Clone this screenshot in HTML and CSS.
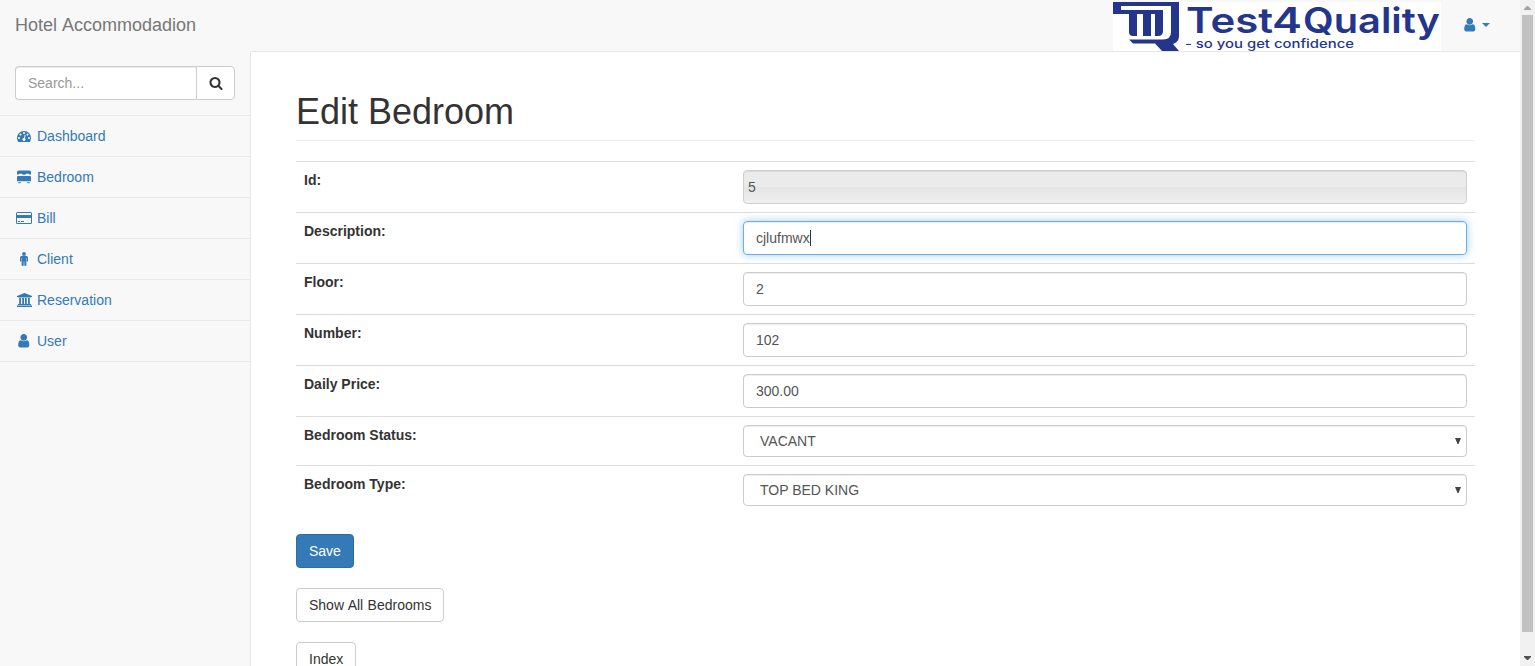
FILE: index.html
```html
<!DOCTYPE html>
<html lang="en">
<head>
<meta charset="utf-8">
<title>Edit Bedroom</title>
<link rel="stylesheet" href="styles.css">
</head>
<body>
<div class="window">
  <div class="app">
    <header class="navbar">
      <a class="brand">Hotel Accommodadion</a>
      <svg class="logo" width="328" height="49" viewBox="0 0 328 49">
        <rect width="328" height="49" fill="#fff"/>
        <g fill="#24358c">
          <path d="M0 0H66V34Q66 40 60 42L66 49H49L42 41.500H20L16 37.500H50Q58 37.500 58 30V4H8V8H50V29Q50 34 45 34H42V12H38V34H30V12H24V34H20Q16 34 16 30V12H0Z"/>
          <text class="wordmark" y="31"><tspan x="73" textLength="87" lengthAdjust="spacingAndGlyphs">Test</tspan><tspan x="159" textLength="30" lengthAdjust="spacingAndGlyphs">4</tspan><tspan x="190" textLength="137" lengthAdjust="spacingAndGlyphs">Quality</tspan></text>
          <text class="tagline" x="72" y="46" textLength="169" lengthAdjust="spacingAndGlyphs">- so you get confidence</text>
        </g>
      </svg>
      <a class="account">
        <svg class="icon user" viewBox="0 0 1792 1792"><path d="M1536 1399q0 109-62.5 187t-150.5 78h-854q-88 0-150.5-78t-62.5-187q0-85 8.5-160.5t31.5-152 58.5-131 94-89 134.5-34.5q131 128 313 128t313-128q76 0 134.5 34.5t94 89 58.5 131 31.5 152 8.5 160.5zm-256-887q0 159-112.5 271.5t-271.5 112.5-271.5-112.5-112.5-271.5 112.5-271.5 271.5-112.5 271.5 112.5 112.5 271.5z"/></svg>
        <svg class="caret" viewBox="0 0 8 4"><path d="M0 0H8L4 4Z"/></svg>
      </a>
    </header>
    <div class="body">
      <nav class="sidebar">
        <div class="search">
          <input class="search-input" type="text" placeholder="Search...">
          <button class="search-button"><svg class="icon" viewBox="0 0 1792 1792"><path d="M1216 832q0-185-131.5-316.5t-316.5-131.5-316.5 131.5-131.5 316.5 131.5 316.5 316.5 131.5 316.5-131.5 131.5-316.5zm512 832q0 52-38 90t-90 38q-54 0-90-38l-343-342q-179 124-399 124-143 0-273.5-55.5t-225-150-150-225-55.5-273.5 55.5-273.5 150-225 225-150 273.5-55.5 273.500 55.500 225 150 150 225 55.500 273.500q0 220-124 399l343 343q37 37 37 90z"/></svg></button>
        </div>
        <a class="item"><svg class="icon" viewBox="0 0 1792 1792"><path d="M384 1152q0-53-37.5-90.5t-90.5-37.5-90.5 37.5-37.5 90.5 37.5 90.5 90.5 37.5 90.5-37.5 37.5-90.5zm192-448q0-53-37.5-90.5t-90.5-37.5-90.5 37.5-37.5 90.5 37.5 90.5 90.5 37.5 90.5-37.5 37.5-90.5zm428 481l101-382q6-26-7.5-48.5t-38.5-29.5-48 6.5-30 39.5l-101 382q-60 5-107 43.5t-63 98.5q-20 77 20 146t117 89 146-20 89-117q16-60-6-117t-72-91zm660-33q0-53-37.5-90.5t-90.5-37.5-90.5 37.5-37.5 90.5 37.5 90.5 90.5 37.5 90.5-37.5 37.5-90.5zm-640-640q0-53-37.5-90.5t-90.5-37.5-90.5 37.5-37.5 90.5 37.5 90.5 90.5 37.5 90.5-37.5 37.5-90.5zm448 192q0-53-37.5-90.5t-90.5-37.5-90.5 37.5-37.5 90.5 37.5 90.5 90.5 37.5 90.5-37.5 37.5-90.5zm320 448q0 261-141 483-19 29-54 29h-1402q-35 0-54-29-141-221-141-483 0-182 71-348t191-286 286-191 348-71 348 71 286 191 191 286 71 348z"/></svg>Dashboard</a>
        <a class="item"><svg class="icon" viewBox="0 0 14 14"><path d="M0 2Q0 .5 1.500 .5H12.500Q14 .5 14 2V4.500H12.500L11.500 3.700H9L8 4.800H6L5 3.700H2.500L1.500 4.500H0ZM1 6H13Q14 6 14 7V11.300H0V7Q0 6 1 6ZM1 12.200H4L3.500 13.200H1.500ZM10 12.200H13L12.500 13.200H10.500Z"/></svg>Bedroom</a>
        <a class="item"><svg class="icon wide" viewBox="0 0 16 14"><path fill-rule="evenodd" d="M1.5 1H14.5Q16 1 16 2.5V11.5Q16 13 14.5 13H1.5Q0 13 0 11.5V2.5Q0 1 1.5 1ZM1 2V4H15V2ZM1 7V12H15V7ZM2 10H4V11H2ZM5 10H8V11H5Z"/></svg>Bill</a>
        <a class="item"><svg class="icon" viewBox="0 0 14 14"><circle cx="7" cy="2" r="1.9"/><path d="M4.500 4H9.500Q11 4 11 5.500V9Q11 9.600 10.400 9.600T9.800 9V6H9.400V13Q9.400 14 8.300 14T7.300 13V9.500H6.700V13Q6.700 14 5.700 14T4.600 13V6H4.200V9Q4.200 9.600 3.600 9.600T3 9V5.500Q3 4 4.500 4Z"/></svg>Client</a>
        <a class="item"><svg class="icon bank" viewBox="0 0 15 14"><path d="M7.500 0L15 3V4H14V4.600H1V4H0V3ZM2.200 5H4V11H5.200V5H7V11H8V5H9.800V11H11V5H12.800V11H14V12H1V11H2.200ZM0 12.600H15V14H0Z"/></svg>Reservation</a>
        <a class="item"><svg class="icon user" viewBox="0 0 1792 1792"><path d="M1536 1399q0 109-62.5 187t-150.5 78h-854q-88 0-150.5-78t-62.5-187q0-85 8.5-160.5t31.5-152 58.5-131 94-89 134.5-34.5q131 128 313 128t313-128q76 0 134.5 34.5t94 89 58.5 131 31.5 152 8.5 160.5zm-256-887q0 159-112.5 271.5t-271.5 112.5-271.5-112.5-112.5-271.5 112.5-271.5 271.5-112.5 271.5 112.5 112.5 271.5z"/></svg>User</a>
      </nav>
      <main class="page">
        <h1 class="title">Edit Bedroom</h1>
        <div class="form">
          <div class="row"><label>Id:</label><div class="field disabled">5</div></div>
          <div class="row"><label>Description:</label><div class="field focused">cjlufmwx<span class="cursor"></span></div></div>
          <div class="row"><label>Floor:</label><div class="field">2</div></div>
          <div class="row"><label>Number:</label><div class="field">102</div></div>
          <div class="row"><label>Daily Price:</label><div class="field">300.00</div></div>
          <div class="row"><label>Bedroom Status:</label><div class="field select">VACANT<svg class="arrow" viewBox="0 0 6 6"><path d="M0 0H6L3.5 6H2.5Z"/></svg></div></div>
          <div class="row"><label>Bedroom Type:</label><div class="field select">TOP BED KING<svg class="arrow" viewBox="0 0 6 6"><path d="M0 0H6L3.5 6H2.5Z"/></svg></div></div>
        </div>
        <div class="actions">
          <button class="button primary">Save</button>
          <button class="button show-all">Show All Bedrooms</button>
          <button class="button">Index</button>
        </div>
      </main>
    </div>
  </div>
  <div class="scrollbar">
    <svg class="scroll-arrow" viewBox="0 0 7 4"><path fill="#a3a3a3" d="M3 0H4L7 3V4H0V3Z"/></svg>
    <div class="thumb"></div>
    <svg class="scroll-arrow" viewBox="0 0 7 4"><path fill="#505050" d="M0 0H7V1L4 4H3L0 1Z"/></svg>
  </div>
</div>
</body>
</html>
```

FILE: styles.css
```css
* { box-sizing: border-box; }
body {
  margin: 0;
  overflow: hidden;
  font: 14px/20px "Liberation Sans", Arial, sans-serif;
  color: #333;
  background: #fff;
}
.window { display: flex; height: 666px; overflow: hidden; }
.app { flex: 1; display: flex; flex-direction: column; background: #f8f8f8; }
.navbar { display: flex; height: 51px; flex: none; }
.brand { padding: 15px; flex: 1; font-size: 18px; word-spacing: 1px; color: #777; }
.logo { margin-top: 2px; display: block; overflow: visible; }
.wordmark { font: 600 35px Inter, sans-serif; }
.tagline { font: 500 12px Inter, sans-serif; }
.account { display: flex; align-items: center; gap: 5px; width: 79px; height: 50px; padding-left: 20.5px; color: #337ab7; }
.icon { width: 14px; height: 14px; fill: currentColor; flex: none; }
.icon.wide { width: 16px; }
.icon.bank { width: 15px; }
.icon.user { width: 15.5px; height: 15.5px; }
.caret { width: 8px; height: 4px; fill: currentColor; }
.body { display: flex; flex: 1; min-height: 0; }
.sidebar { width: 250px; flex: none; }
.search { display: flex; padding: 15px; border-bottom: 1px solid #e7e7e7; }
.search-input {
  width: 182px;
  height: 34px;
  padding: 6px 12px;
  font: inherit;
  border: 1px solid #ccc;
  border-right: 0;
  border-radius: 4px 0 0 4px;
  box-shadow: inset 0 1px 1px rgba(0, 0, 0, .075);
}
.search-input::placeholder { color: #999; }
.search-button {
  display: flex;
  align-items: center;
  width: 39px;
  margin-left: -1px;
  padding: 0 12px;
  color: #333;
  background: #fff;
  border: 1px solid #ccc;
  border-radius: 0 4px 4px 0;
}
.item {
  display: grid;
  grid-template-columns: 18px 1fr;
  column-gap: 4px;
  align-items: center;
  height: 41px;
  padding: 0 15px;
  color: #337ab7;
  border-bottom: 1px solid #e7e7e7;
}
.item .icon { justify-self: center; }
.page {
  flex: 1;
  padding: 0 45px;
  background: #fff;
  border-left: 1px solid #e7e7e7;
  border-top: 1px solid #e7e7e7;
}
.title {
  margin: 40px 0 20px;
  padding-bottom: 9px;
  font-size: 36px;
  font-weight: 500;
  line-height: 39px;
  border-bottom: 1px solid #eee;
}
.row {
  display: grid;
  grid-template-columns: 431px 1fr;
  gap: 8px;
  padding: 8px;
  border-top: 1px solid #ddd;
}
.row label { font-weight: 700; }
.field {
  display: flex;
  align-items: center;
  height: 34px;
  padding: 0 12px;
  color: #555;
  border: 1px solid #ccc;
  border-radius: 4px;
  box-shadow: inset 0 1px 1px rgba(0, 0, 0, .075);
}
.disabled {
  padding: 0 4px;
  border-color: #d0d0d0;
  background: linear-gradient(#ebebeb 0 50%, #e4e4e4 50%, #f0f0f0);
}
.focused {
  border-color: #66afe9;
  box-shadow: inset 0 1px 1px rgba(0, 0, 0, .075), 0 0 8px rgba(102, 175, 233, .6);
}
.cursor { width: 1px; height: 16px; background: #333; }
.select { height: 32px; padding: 0 5px 0 16px; justify-content: space-between; }
.arrow { width: 6px; height: 6px; fill: #444; }
.actions { display: flex; flex-direction: column; align-items: flex-start; gap: 20px; margin-top: 20px; }
.button {
  height: 34px;
  padding: 6px 12px;
  font: inherit;
  color: #333;
  background: #fff;
  border: 1px solid #ccc;
  border-radius: 4px;
}
.show-all { word-spacing: .5px; }
.primary { color: #fff; background: #337ab7; border-color: #2e6da4; }
.scrollbar {
  display: flex;
  flex-direction: column;
  align-items: center;
  width: 15px;
  padding: 6px 0;
  background: #f1f1f1;
}
.thumb { width: 11px; height: 617px; margin: 5px 0 24px; background: #c1c1c1; }
.scroll-arrow { width: 7px; height: 4px; flex: none; }
```
